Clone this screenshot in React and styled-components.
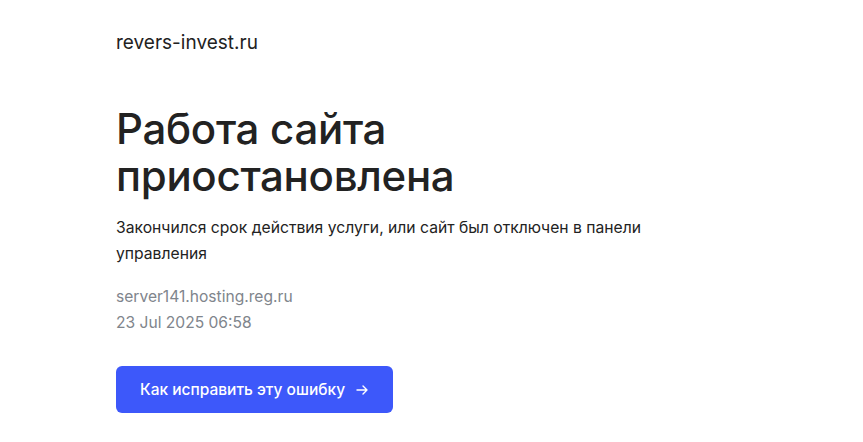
import React from 'react';
import styled, { createGlobalStyle } from 'styled-components';

const GlobalStyle = createGlobalStyle`
  html, body {
    margin: 0;
    padding: 0;
    background: #ffffff;
  }
  body {
    font-family: Inter, "Noto Sans", sans-serif;
    color: #222222;
  }
`;

const Page = styled.main`
  display: flex;
  flex-direction: column;
  align-items: flex-start;
  padding: 30px 116px 0;
`;

const Domain = styled.div`
  font-size: 19px;
  line-height: 26px;
  color: #222222;
`;

const Title = styled.h1`
  margin: 49px 0 0;
  font-size: 42px;
  line-height: 47px;
  font-weight: 500;
  letter-spacing: -0.3px;
  color: #222222;
`;

const Description = styled.p`
  margin: 16px 0 0;
  max-width: 560px;
  font-size: 15.7px;
  line-height: 26px;
  color: #222222;
`;

const Meta = styled.div`
  margin-top: 17px;
  font-size: 15.6px;
  line-height: 26px;
  color: #80858c;
`;

const Button = styled.a`
  display: inline-flex;
  align-items: center;
  gap: 10px;
  margin-top: 30px;
  height: 47px;
  padding: 0 24px;
  border-radius: 6px;
  background: #3d58fa;
  color: #ffffff;
  font-size: 15.5px;
  font-weight: 500;
  text-decoration: none;
`;

const Arrow = () => (
  <svg width="14" height="14" viewBox="0 0 14 14" fill="none" stroke="currentColor" strokeWidth="1.4" strokeLinecap="round" strokeLinejoin="round">
    <path d="M2 7h10M8 3l4 4-4 4" />
  </svg>
);

export default function App() {
  return (
    <>
      <GlobalStyle />
      <Page>
        <Domain>revers-invest.ru</Domain>
        <Title>
          Работа сайта
          <br />
          приостановлена
        </Title>
        <Description>
          Закончился срок действия услуги, или сайт был отключен в панели управления
        </Description>
        <Meta>
          server141.hosting.reg.ru
          <br />
          23 Jul 2025 06:58
        </Meta>
        <Button href="#">
          Как исправить эту ошибку
          <Arrow />
        </Button>
      </Page>
    </>
  );
}
